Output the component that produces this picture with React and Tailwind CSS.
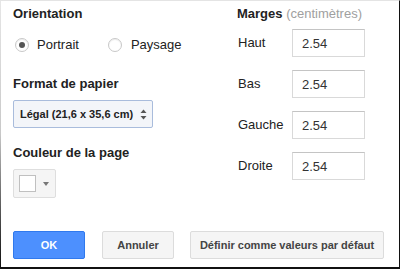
import React from "react";

function Radio({ checked, className = "" }) {
  return (
    <span
      className={
        "w-[14px] h-[14px] rounded-full border border-[#c8c8c8] bg-white flex items-center justify-center shadow-[inset_0_1px_1px_rgba(0,0,0,0.08)] shrink-0 " +
        className
      }
    >
      {checked && <span className="w-[6px] h-[6px] rounded-full bg-[#555]" />}
    </span>
  );
}

function MarginRow({ label }) {
  return (
    <div className="flex items-center h-[28px] pl-[1px]">
      <span className="w-[54px] text-[13px] text-[#222]">{label}</span>
      <input
        readOnly
        value="2.54"
        className="w-[73px] h-[28px] border border-[#d9d9d9] border-t-[#c4c4c4] bg-white pl-[9px] text-[13px] text-[#333] outline-none"
      />
    </div>
  );
}

export default function App() {
  return (
    <div className="w-[400px] h-[269px] flex bg-white font-['Liberation_Sans',Arial,sans-serif] text-[#222] border-t border-r border-b-2 border-t-[#e4e4e4] border-r-[#111] border-b-[#111] overflow-hidden">
      <div className="w-px shrink-0 bg-linear-to-b from-[#e6e6e6] via-[#c8c8c8] to-[#111]" />
      <div className="flex-1 flex flex-col pl-[12px] pt-[5px]">
        <div className="flex">
          <div className="w-[224px] flex flex-col">
            <div className="text-[13px] font-bold leading-[16px]">Orientation</div>
            <div className="mt-[15px] flex items-center h-[16px] text-[13px] leading-[16px] pl-[2px]">
              <Radio checked />
              <span className="ml-[8px]">Portrait</span>
              <Radio className="ml-[29px]" />
              <span className="ml-[9px]">Paysage</span>
            </div>
            <div className="mt-[23px] text-[13px] font-bold leading-[16px]">Format de papier</div>
            <div className="mt-[8px] w-[140px] h-[28px] border border-[#a9bcdc] rounded-[2px] bg-[#f3f5f9] flex items-center justify-between pl-[6px] pr-[5px] text-[11px] font-bold text-[#222]">
              <span>Légal (21,6 x 35,6 cm)</span>
              <svg width="7" height="11" viewBox="0 0 7 11">
                <path d="M3.5 0.5 L6.5 4 L0.5 4 Z" fill="#555" />
                <path d="M3.5 10.5 L6.5 7 L0.5 7 Z" fill="#555" />
              </svg>
            </div>
            <div className="mt-[17px] text-[13px] font-bold leading-[16px]">Couleur de la page</div>
            <div className="mt-[8px] w-[43px] h-[29px] border border-[#dedede] rounded-[2px] bg-[#f5f5f5] flex items-center pl-[5px]">
              <span className="w-[17px] h-[17px] border border-[#c0c0c0] bg-white" />
              <span className="ml-[7px] w-0 h-0 border-l-[3px] border-r-[3px] border-t-[4px] border-l-transparent border-r-transparent border-t-[#777]" />
            </div>
          </div>
          <div className="flex flex-col">
            <div className="text-[13px] leading-[16px]">
              <span className="font-bold">Marges</span>{" "}
              <span className="text-[#a0a0a0]">(centimètres)</span>
            </div>
            <div className="mt-[7px] flex flex-col gap-[13px]">
              <MarginRow label="Haut" />
              <MarginRow label="Bas" />
              <MarginRow label="Gauche" />
              <MarginRow label="Droite" />
            </div>
          </div>
        </div>
        <div className="mt-[33px] flex">
          <button
            type="button"
            className="w-[72px] h-[28px] rounded-[2px] border border-[#3079ed] bg-[#4d90fe] text-white text-[11px] font-bold"
          >
            OK
          </button>
          <button
            type="button"
            className="ml-[17px] w-[72px] h-[28px] rounded-[2px] border border-[#dcdcdc] bg-[#f5f5f5] text-[#444] text-[11px] font-bold"
          >
            Annuler
          </button>
          <button
            type="button"
            className="ml-[16px] w-[194px] h-[28px] rounded-[2px] border border-[#dcdcdc] bg-[#f5f5f5] text-[#444] text-[11px] font-bold"
          >
            Définir comme valeurs par défaut
          </button>
        </div>
      </div>
    </div>
  );
}
